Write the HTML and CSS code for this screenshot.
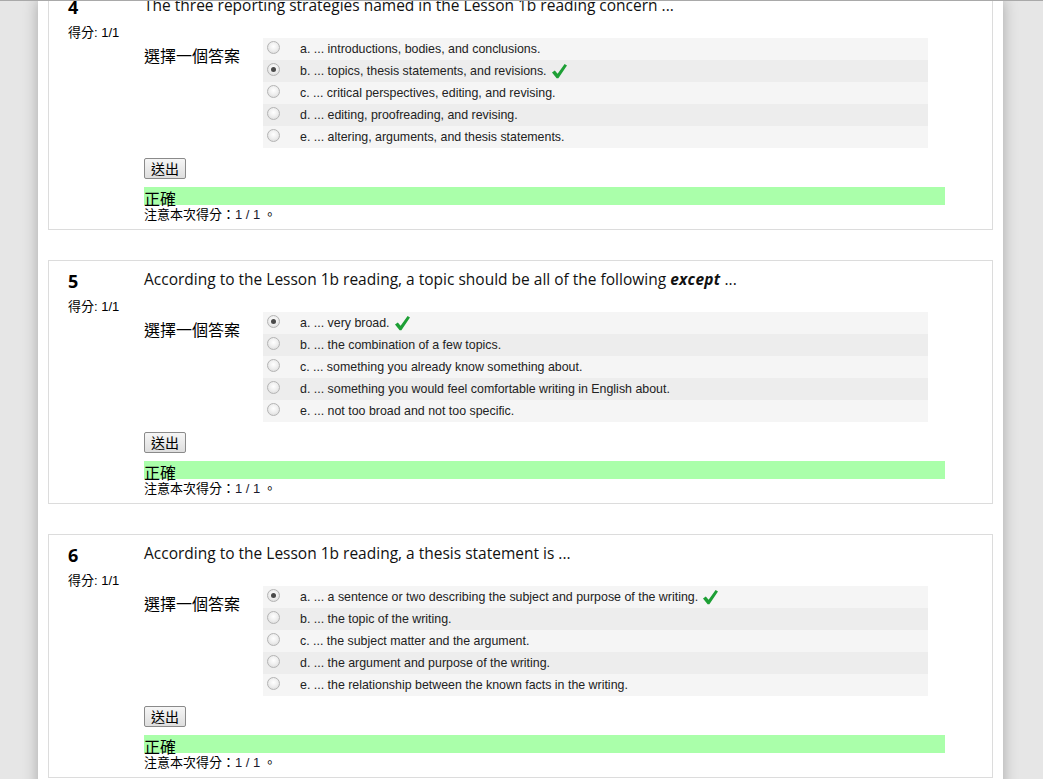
FILE: index.html
```html
<!DOCTYPE html>
<html lang="zh-Hant">
<head>
<meta charset="utf-8">
<title>Quiz review</title>
<link rel="stylesheet" href="styles.css">
</head>
<body>
<div class="topline"></div>
<div class="page">

  <div class="que first">
    <div class="info">
      <div class="no">4</div>
      <div class="grade">得分: 1/1</div>
    </div>
    <div class="content">
      <div class="qtext">The three reporting strategies named in the Lesson 1b reading concern ...</div>
      <div class="ablock">
        <div class="prompt">選擇一個答案</div>
        <div class="answer">
          <div class="row r0"><span class="radio"></span><span class="lbl">a. ... introductions, bodies, and conclusions.</span></div>
          <div class="row r1"><span class="radio checked"></span><span class="lbl">b. ... topics, thesis statements, and revisions.</span><svg class="tick" viewBox="0 0 16 16"><polygon points="1,9.5 3.8,7.6 6.6,10.8 13.6,1 16,2.6 7.4,15.2 5.6,15.2"/></svg></div>
          <div class="row r0"><span class="radio"></span><span class="lbl">c. ... critical perspectives, editing, and revising.</span></div>
          <div class="row r1"><span class="radio"></span><span class="lbl">d. ... editing, proofreading, and revising.</span></div>
          <div class="row r0"><span class="radio"></span><span class="lbl">e. ... altering, arguments, and thesis statements.</span></div>
        </div>
      </div>
      <button class="submit" type="button">送出</button>
      <div class="correct"><span class="ctext">正確</span></div>
      <div class="notice">注意本次得分：<span class="pts">1 / 1</span> 。</div>
    </div>
  </div>

  <div class="que">
    <div class="info">
      <div class="no">5</div>
      <div class="grade">得分: 1/1</div>
    </div>
    <div class="content">
      <div class="qtext">According to the Lesson 1b reading, a topic should be all of the following <b><i>except</i></b> ...</div>
      <div class="ablock">
        <div class="prompt">選擇一個答案</div>
        <div class="answer">
          <div class="row r0"><span class="radio checked"></span><span class="lbl">a. ... very broad.</span><svg class="tick" viewBox="0 0 16 16"><polygon points="1,9.5 3.8,7.6 6.6,10.8 13.6,1 16,2.6 7.4,15.2 5.6,15.2"/></svg></div>
          <div class="row r1"><span class="radio"></span><span class="lbl">b. ... the combination of a few topics.</span></div>
          <div class="row r0"><span class="radio"></span><span class="lbl">c. ... something you already know something about.</span></div>
          <div class="row r1"><span class="radio"></span><span class="lbl">d. ... something you would feel comfortable writing in English about.</span></div>
          <div class="row r0"><span class="radio"></span><span class="lbl">e. ... not too broad and not too specific.</span></div>
        </div>
      </div>
      <button class="submit" type="button">送出</button>
      <div class="correct"><span class="ctext">正確</span></div>
      <div class="notice">注意本次得分：<span class="pts">1 / 1</span> 。</div>
    </div>
  </div>

  <div class="que">
    <div class="info">
      <div class="no">6</div>
      <div class="grade">得分: 1/1</div>
    </div>
    <div class="content">
      <div class="qtext">According to the Lesson 1b reading, a thesis statement is ...</div>
      <div class="ablock">
        <div class="prompt">選擇一個答案</div>
        <div class="answer">
          <div class="row r0"><span class="radio checked"></span><span class="lbl">a. ... a sentence or two describing the subject and purpose of the writing.</span><svg class="tick" viewBox="0 0 16 16"><polygon points="1,9.5 3.8,7.6 6.6,10.8 13.6,1 16,2.6 7.4,15.2 5.6,15.2"/></svg></div>
          <div class="row r1"><span class="radio"></span><span class="lbl">b. ... the topic of the writing.</span></div>
          <div class="row r0"><span class="radio"></span><span class="lbl">c. ... the subject matter and the argument.</span></div>
          <div class="row r1"><span class="radio"></span><span class="lbl">d. ... the argument and purpose of the writing.</span></div>
          <div class="row r0"><span class="radio"></span><span class="lbl">e. ... the relationship between the known facts in the writing.</span></div>
        </div>
      </div>
      <button class="submit" type="button">送出</button>
      <div class="correct"><span class="ctext">正確</span></div>
      <div class="notice">注意本次得分：<span class="pts">1 / 1</span> 。</div>
    </div>
  </div>

</div>
</body>
</html>
```

FILE: styles.css
```css
html, body {
  margin: 0;
  padding: 0;
  height: 100%;
  overflow: hidden;
}
body {
  background: #e6e6e6;
  font-family: "Liberation Sans", Arial, "Noto Sans CJK TC", sans-serif;
  font-size: 12px;
  color: #000;
}
.topline {
  position: fixed;
  top: 0;
  left: 0;
  right: 0;
  height: 1px;
  background: #a9a9a9;
  z-index: 10;
}
.page {
  width: 945px;
  margin: 0 auto 0 38px;
  padding: 0 10px;
  min-height: 100%;
  background: #fff;
  box-shadow: 0 0 14px rgba(0, 0, 0, 0.28);
  overflow: hidden;
}
.que {
  display: flex;
  border: 1px solid #dcdcdc;
  height: 242px;
  margin-bottom: 30px;
}
.que.first {
  margin-top: -14px;
}
.info {
  width: 76px;
  padding-left: 19px;
  flex: none;
}
.no {
  font-family: "Open Sans", "Liberation Sans", sans-serif;
  font-weight: 700;
  font-size: 18px;
  line-height: 24px;
  margin-top: 8px;
}
.grade {
  font-family: "Liberation Sans", "Noto Sans CJK TC", sans-serif;
  font-size: 13px;
  line-height: 16px;
  margin-top: 6px;
}
.content {
  width: 801px;
  flex: none;
}
.qtext {
  font-family: "Open Sans", "Liberation Sans", sans-serif;
  font-size: 15.5px;
  line-height: 22px;
  margin-top: 7px;
  color: #111;
}
.qtext b i {
  font-weight: 700;
  letter-spacing: 0.3px;
}
.ablock {
  display: flex;
  margin-top: 22px;
}
.prompt {
  width: 119px;
  flex: none;
  font-family: "Noto Sans CJK TC", sans-serif;
  font-size: 16px;
  line-height: 20px;
  padding-top: 7px;
}
.answer {
  width: 665px;
  flex: none;
}
.row {
  display: flex;
  align-items: center;
  height: 22px;
}
.r0 { background: #f5f5f5; }
.r1 { background: #ededed; }
.radio {
  position: relative;
  width: 11px;
  height: 11px;
  margin-left: 4px;
  margin-top: -4px;
  border-radius: 50%;
  border: 1px solid #b4b4b4;
  background: radial-gradient(circle at 50% 40%, #ffffff 0%, #f0f0f0 45%, #d6d6d6 100%);
  flex: none;
}
.radio.checked::after {
  content: "";
  position: absolute;
  left: 3px;
  top: 3px;
  width: 5px;
  height: 5px;
  border-radius: 50%;
  background: #4a4a4a;
}
.lbl {
  margin-left: 20px;
  font-size: 12.4px;
  color: #222;
  white-space: nowrap;
}
.tick {
  width: 16px;
  height: 16px;
  margin-left: 4px;
  fill: #1d9f35;
}
.submit {
  display: block;
  margin: 10px 0 0 0;
  width: 42px;
  height: 21px;
  padding: 0;
  font-family: "Noto Sans CJK TC", sans-serif;
  font-size: 14px;
  line-height: 19px;
  color: #000;
  border: 1px solid #8a8a8a;
  border-radius: 2px;
  background: linear-gradient(#f6f6f6, #dedede);
}
.correct {
  margin-top: 8px;
  height: 18px;
  background: #aaffaa;
  display: flex;
  align-items: center;
}
.ctext {
  font-family: "Noto Sans CJK TC", sans-serif;
  font-size: 16px;
  line-height: 18px;
  height: 18px;
  padding-top: 2px;
  box-sizing: border-box;
}
.notice {
  font-family: "Noto Sans CJK TC", sans-serif;
  font-size: 13px;
  line-height: 18px;
}
.pts {
  font-family: "Liberation Sans", sans-serif;
  color: #1a1a2e;
}
```
